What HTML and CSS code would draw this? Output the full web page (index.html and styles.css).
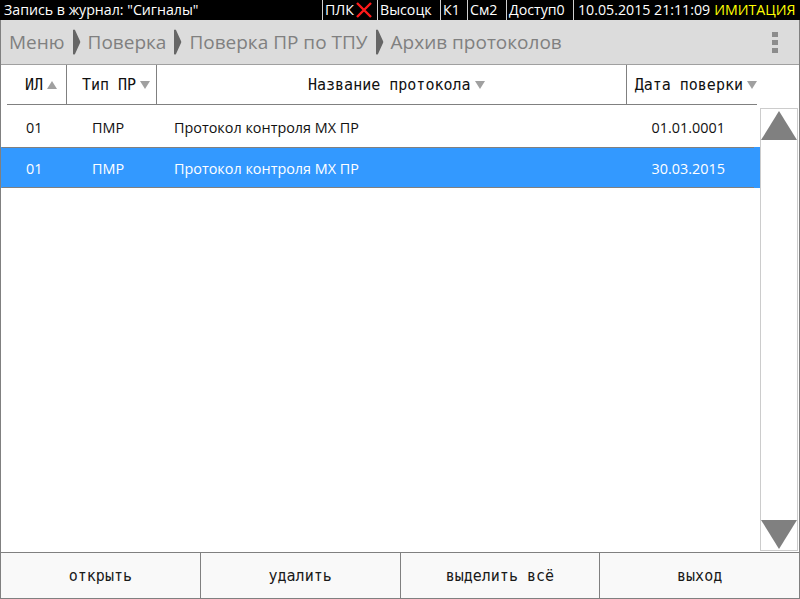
FILE: index.html
```html
<!DOCTYPE html>
<html lang="ru">
<head>
<meta charset="utf-8">
<link rel="stylesheet" href="styles.css">
</head>
<body>
<div class="topbar">
  <div class="seg seg-main">Запись в журнал: "Сигналы"</div>
  <div class="seg seg-plc">ПЛК<svg class="xicon" width="18" height="16" viewBox="0 0 18 16"><path d="M2 1 L16 15 M16 1 L2 15" stroke="#ff1a1a" stroke-width="2.4"/></svg></div>
  <div class="seg seg-city">Высоцк</div>
  <div class="seg seg-k">К1</div>
  <div class="seg seg-sm">См2</div>
  <div class="seg seg-acc">Доступ0</div>
  <div class="seg seg-time">10.05.2015 21:11:09 <span class="sim">ИМИТАЦИЯ</span></div>
</div>
<div class="window">
  <div class="crumbs">
    <span class="crumb">Меню</span>
    <svg class="sep" width="9" height="26" viewBox="0 0 9 26"><path d="M1 1 Q2 0 3 1 L8 12 Q8.6 13 8 14 L3 25 Q2 26 1 25 Z" fill="#666"/></svg>
    <span class="crumb">Поверка</span>
    <svg class="sep" width="9" height="26" viewBox="0 0 9 26"><path d="M1 1 Q2 0 3 1 L8 12 Q8.6 13 8 14 L3 25 Q2 26 1 25 Z" fill="#666"/></svg>
    <span class="crumb">Поверка ПР по ТПУ</span>
    <svg class="sep" width="9" height="26" viewBox="0 0 9 26"><path d="M1 1 Q2 0 3 1 L8 12 Q8.6 13 8 14 L3 25 Q2 26 1 25 Z" fill="#666"/></svg>
    <span class="crumb">Архив протоколов</span>
    <div class="dots"><i></i><i></i><i></i></div>
  </div>
  <div class="tablearea">
    <div class="list">
      <div class="thead">
        <div class="th th-il">ИЛ<span class="tri up"></span></div>
        <div class="th th-type">Тип ПР<span class="tri down"></span></div>
        <div class="th th-name">Название протокола<span class="tri down"></span></div>
        <div class="th th-date">Дата поверки<span class="tri down"></span></div>
      </div>
      <div class="row first">
        <div class="td td-il">01</div>
        <div class="td td-type">ПМР</div>
        <div class="td td-name">Протокол контроля МХ ПР</div>
        <div class="td td-date">01.01.0001</div>
      </div>
      <div class="row selected">
        <div class="td td-il">01</div>
        <div class="td td-type">ПМР</div>
        <div class="td td-name">Протокол контроля МХ ПР</div>
        <div class="td td-date">30.03.2015</div>
      </div>
    </div>
    <div class="scrollbar">
      <svg class="arrow" width="36" height="30" viewBox="0 0 36 30"><path d="M18 1 L36 30 L0 30 Z" fill="#808080"/></svg>
      <svg class="arrow" width="36" height="30" viewBox="0 0 36 30"><path d="M0 0 L36 0 L18 29 Z" fill="#808080"/></svg>
    </div>
  </div>
  <div class="buttons">
    <div class="btn">открыть</div>
    <div class="btn">удалить</div>
    <div class="btn">выделить всё</div>
    <div class="btn">выход</div>
  </div>
</div>
</body>
</html>
```

FILE: styles.css
```css
* { box-sizing: border-box; }
html, body { margin: 0; padding: 0; }
body {
  width: 800px;
  height: 599px;
  overflow: hidden;
  background: #fff;
  font-family: "Open Sans", "Noto Sans", sans-serif;
}
.topbar {
  height: 20px;
  background: #000;
  color: #fff;
  display: flex;
  font-size: 14.2px;
  line-height: 20px;
  white-space: nowrap;
}
.seg {
  border-left: 1px solid #d0d0d0;
  padding-left: 2px;
  display: flex;
  align-items: center;
}
.seg-main { border-left: none; padding-left: 4px; width: 322px; }
.seg-plc { width: 55px; }
.xicon { margin-left: 1px; }
.seg-city { width: 63px; }
.seg-k { width: 27px; }
.seg-sm { width: 39px; }
.seg-acc { width: 67px; }
.seg-time { flex: 1; padding-left: 4px; }
.sim { color: #ffff00; margin-left: 4px; }

.window {
  height: 579px;
  border-left: 1px solid #808080;
  border-right: 1px solid #808080;
  border-bottom: 1px solid #808080;
  display: flex;
  flex-direction: column;
}
.crumbs {
  height: 45px;
  background: #dcdcdc;
  border-bottom: 1px solid #a0a0a0;
  display: flex;
  align-items: center;
  padding-left: 8px;
  color: #808080;
  font-size: 19px;
  white-space: nowrap;
}
.crumb { padding: 0 5px 0 0; }
.sep { margin: 0 7px 0 2px; }
.dots {
  margin-left: auto;
  margin-right: 21px;
  display: flex;
  flex-direction: column;
  gap: 3px;
}
.dots i {
  display: block;
  width: 6px;
  height: 5px;
  background: #8c8c8c;
}
.tablearea {
  flex: 1;
  display: flex;
  min-height: 0;
}
.list {
  width: 759px;
}
.thead {
  height: 40px;
  display: flex;
  margin-left: 6px;
  width: 750px;
  border-bottom: 1px solid #808080;
  font-family: "DejaVu Sans Mono", monospace;
  font-size: 15px;
  color: #111;
  white-space: nowrap;
}
.th {
  display: flex;
  align-items: center;
  border-right: 1px solid #808080;
}
.th-il { width: 60px; padding-left: 18px; }
.th-type { width: 90px; padding-left: 15px; }
.th-name { width: 470px; justify-content: center; padding-left: 10px; }
.th-date { border-right: none; flex: 1; padding-left: 8px; }
.tri {
  display: inline-block;
  flex: none;
  width: 0;
  height: 0;
  margin-left: 4px;
  border-left: 5px solid transparent;
  border-right: 5px solid transparent;
}
.tri.up { border-bottom: 8px solid #a0a0a0; }
.tri.down { border-top: 8px solid #a0a0a0; }

.row {
  height: 42px;
  display: flex;
  align-items: center;
  padding-top: 3px;
  font-size: 14.4px;
  color: #111;
  white-space: nowrap;
}
.row.selected {
  height: 41px;
  padding-top: 2px;
  color: #fff;
  background:
    linear-gradient(#808080, #808080) 1px 0 / 752px 1px no-repeat,
    linear-gradient(#808080, #808080) 1px 100% / 752px 1px no-repeat,
    #3399ff;
}
.td-il { width: 66px; padding-left: 25px; }
.td-type { width: 107px; padding-left: 25px; }
.td-name { width: 409px; }
.td-date { width: 142px; text-align: right; }

.scrollbar {
  width: 38px;
  margin-top: 43px;
  margin-bottom: 1px;
  border: 1px solid #cccccc;
  display: flex;
  flex-direction: column;
  justify-content: space-between;
  padding: 1px 0 0 0;
}
.arrow { display: block; }

.buttons {
  height: 46px;
  border-top: 1px solid #808080;
  display: flex;
  background: #f9f9f9;
  font-family: "DejaVu Sans Mono", monospace;
  font-size: 15px;
  color: #1a1a1a;
}
.btn {
  width: 200px;
  display: flex;
  align-items: center;
  justify-content: center;
  border-left: 1px solid #808080;
}
.btn:first-child { border-left: none; width: 199px; }
```
